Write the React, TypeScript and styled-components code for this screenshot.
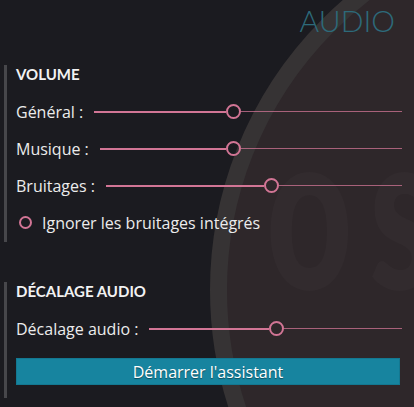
import React from "react";
import styled, { createGlobalStyle } from "styled-components";

const GlobalStyle = createGlobalStyle`
  html, body { margin: 0; padding: 0; background: #1b1b20; }
  body { font-family: "Open Sans", Lato, sans-serif; }
`;

const Page = styled.div`
  position: relative;
  width: 414px;
  height: 407px;
  overflow: hidden;
  background: #1b1b20;
  color: #ececec;
  font-family: "Open Sans", "Noto Sans", sans-serif;
`;

const Backdrop = styled.div`
  position: absolute;
  left: 210px;
  top: -93px;
  width: 766px;
  height: 766px;
  box-sizing: border-box;
  border-radius: 50%;
  border: 17px solid #363334;
  background: #2e272a;
`;

const LogoText = styled.div`
  position: absolute;
  left: 266px;
  top: 91px;
  font-family: Lato, sans-serif;
  font-size: 200px;
  font-weight: 900;
  line-height: 1;
  letter-spacing: 22px;
  color: rgba(255, 255, 255, 0.018);
  transform: scale(0.75, 1.12);
  transform-origin: left top;
  white-space: nowrap;
`;

const Content = styled.div`
  position: relative;
  display: flex;
  flex-direction: column;
  padding: 0 12px 0 4px;
`;

const Header = styled.h1`
  margin: 0;
  height: 41px;
  line-height: 41px;
  padding-right: 7px;
  text-align: right;
  font-family: Lato, sans-serif;
  font-size: 30px;
  font-weight: 300;
  color: #2d6a7a;
`;

const Section = styled.section<{ $top: number; $bottom: number }>`
  margin-top: ${(p) => p.$top}px;
  padding: 0 0 ${(p) => p.$bottom}px 9px;
  border-left: 3px solid #47474b;
  display: flex;
  flex-direction: column;
`;

const Heading = styled.h2`
  margin: 0 0 10px;
  font-family: Lato, sans-serif;
  font-size: 15px;
  line-height: 18px;
  font-weight: 700;
  color: #f2f2f2;
`;

const Row = styled.div`
  display: flex;
  align-items: center;
  height: 37px;
  gap: 11px;
`;

const Label = styled.span`
  font-size: 16px;
  line-height: 20px;
  white-space: nowrap;
`;

const Slider = styled.div`
  flex: 1;
  display: flex;
  align-items: center;
  height: 15px;
`;

const Fill = styled.div`
  height: 2px;
  background: #d27595;
  flex: none;
`;

const Thumb = styled.div`
  flex: none;
  width: 15px;
  height: 15px;
  box-sizing: border-box;
  border: 2px solid #d27595;
  border-radius: 50%;
`;

const Rest = styled.div`
  flex: 1;
  height: 1px;
  background: rgba(210, 117, 149, 0.75);
`;

const CheckRow = styled(Row)`
  gap: 10px;
`;

const CheckCircle = styled.span`
  width: 13px;
  height: 13px;
  margin-left: 3px;
  box-sizing: border-box;
  border: 2px solid #d27595;
  border-radius: 50%;
  flex: none;
`;

const Button = styled.button`
  margin: 11px 2px 0 0;
  height: 27px;
  border: 1px solid #137891;
  background: #17849f;
  color: #ffffff;
  font-family: inherit;
  font-size: 16px;
  text-shadow: 0 1px 1px rgba(0, 0, 0, 0.45);
  padding: 0;
  cursor: pointer;
`;

type SliderRowProps = { label: string; value: number };

const SliderRow: React.FC<SliderRowProps> = ({ label, value }) => (
  <Row>
    <Label>{label}</Label>
    <Slider>
      <Fill style={{ width: `calc(${value} * (100% - 15px))` }} />
      <Thumb />
      <Rest />
    </Slider>
  </Row>
);

export default function App() {
  return (
    <Page>
      <GlobalStyle />
      <Backdrop />
      <LogoText aria-hidden="true">osu!</LogoText>
      <Content>
        <Header>AUDIO</Header>
        <Section $top={24} $bottom={1}>
          <Heading>VOLUME</Heading>
          <SliderRow label="Général :" value={0.45} />
          <SliderRow label="Musique :" value={0.438} />
          <SliderRow label="Bruitages :" value={0.562} />
          <CheckRow>
            <CheckCircle />
            <Label>Ignorer les bruitages intégrés</Label>
          </CheckRow>
        </Section>
        <Section $top={40} $bottom={13}>
          <Heading>DÉCALAGE AUDIO</Heading>
          <SliderRow label="Décalage audio :" value={0.504} />
          <Button>Démarrer l'assistant</Button>
        </Section>
      </Content>
    </Page>
  );
}
